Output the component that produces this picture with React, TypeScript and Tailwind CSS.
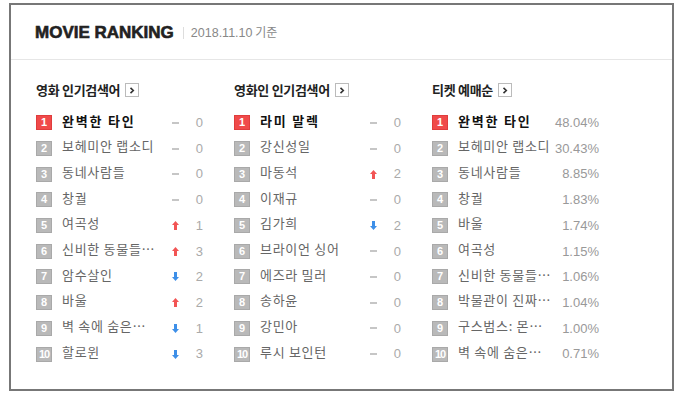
import React from "react";

type Trend = "same" | "up" | "down";
type Row = { name: string; trend?: Trend; diff?: number; rate?: string };

const KR = "font-['Noto_Sans_CJK_KR','Noto_Sans',sans-serif]";

const movieSearch: Row[] = [
  { name: "완벽한 타인", trend: "same", diff: 0 },
  { name: "보헤미안 랩소디", trend: "same", diff: 0 },
  { name: "동네사람들", trend: "same", diff: 0 },
  { name: "창궐", trend: "same", diff: 0 },
  { name: "여곡성", trend: "up", diff: 1 },
  { name: "신비한 동물들⋯", trend: "up", diff: 3 },
  { name: "암수살인", trend: "down", diff: 2 },
  { name: "바울", trend: "up", diff: 2 },
  { name: "벽 속에 숨은⋯", trend: "down", diff: 1 },
  { name: "할로윈", trend: "down", diff: 3 },
];

const peopleSearch: Row[] = [
  { name: "라미 말렉", trend: "same", diff: 0 },
  { name: "강신성일", trend: "same", diff: 0 },
  { name: "마동석", trend: "up", diff: 2 },
  { name: "이재규", trend: "same", diff: 0 },
  { name: "김가희", trend: "down", diff: 2 },
  { name: "브라이언 싱어", trend: "same", diff: 0 },
  { name: "에즈라 밀러", trend: "same", diff: 0 },
  { name: "송하윤", trend: "same", diff: 0 },
  { name: "강민아", trend: "same", diff: 0 },
  { name: "루시 보인턴", trend: "same", diff: 0 },
];

const ticketRank: Row[] = [
  { name: "완벽한 타인", rate: "48.04%" },
  { name: "보헤미안 랩소디", rate: "30.43%" },
  { name: "동네사람들", rate: "8.85%" },
  { name: "창궐", rate: "1.83%" },
  { name: "바울", rate: "1.74%" },
  { name: "여곡성", rate: "1.15%" },
  { name: "신비한 동물들⋯", rate: "1.06%" },
  { name: "박물관이 진짜⋯", rate: "1.04%" },
  { name: "구스범스: 몬⋯", rate: "1.00%" },
  { name: "벽 속에 숨은⋯", rate: "0.71%" },
];

const TrendIcon = ({ trend }: { trend: Trend }) => {
  if (trend === "same") return <span className="block w-[7px] h-[2px] bg-[#c6c6c6]" />;
  if (trend === "up")
    return (
      <svg width="7" height="9" viewBox="0 0 7 9" className="block">
        <path d="M3.5 0 L7 4 H5 V9 H2 V4 H0 Z" fill="#f25454" />
      </svg>
    );
  return (
    <svg width="7" height="9" viewBox="0 0 7 9" className="block">
      <path d="M3.5 9 L7 5 H5 V0 H2 V5 H0 Z" fill="#3d8fe8" />
    </svg>
  );
};

const Badge = ({ rank }: { rank: number }) => (
  <span
    className={`w-[16px] h-[15px] shrink-0 flex items-center justify-center border text-white font-bold text-[11px] leading-none font-['Liberation_Sans',sans-serif] ${
      rank === 1 ? "bg-[#f04a4a] border-[#e03c3c]" : "bg-[#b9b9b9] border-[#a9a9a9]"
    } ${rank === 10 ? "tracking-[-1px]" : ""}`}
  >
    {rank}
  </span>
);

const Column = ({ title, rows }: { title: string; rows: Row[] }) => (
  <div className="w-[198px] shrink-0">
    <div className="h-[16px] flex items-center gap-[5px]">
      <span className={`${KR} text-[13px] font-bold text-[#222] tracking-[-0.3px]`}>{title}</span>
      <span className="w-[14px] h-[14px] border border-[#bbb] flex items-center justify-center">
        <svg width="6" height="7" viewBox="0 0 6 7">
          <path d="M1.5 0.8 L4.3 3.5 L1.5 6.2" stroke="#333" strokeWidth="1.6" fill="none" />
        </svg>
      </span>
    </div>
    <ul className="mt-[12px]">
      {rows.map((r, i) => (
        <li key={i} className="h-[25.7px] flex items-center">
          <Badge rank={i + 1} />
          <span
            className={`ml-[10px] pb-[5px] whitespace-nowrap overflow-hidden ${KR} text-[13px] ${
              r.rate ? "flex-1" : "w-[110px]"
            } ${i === 0 ? "font-bold text-[#111] tracking-[1.8px]" : "text-[#666] tracking-[0.7px]"}`}
          >
            {r.name}
          </span>
          {r.trend && (
            <>
              <span className="w-[7px] flex justify-center">
                <TrendIcon trend={r.trend} />
              </span>
              <span className="w-[24px] text-right text-[13px] text-[#aaa] font-['Liberation_Sans',sans-serif]">
                {r.diff}
              </span>
            </>
          )}
          {r.rate && (
            <span className="w-[46px] mr-[31px] text-right text-[13px] text-[#999] font-['Liberation_Sans',sans-serif]">
              {r.rate}
            </span>
          )}
        </li>
      ))}
    </ul>
  </div>
);

export default function App() {
  return (
    <div className="w-[684px] h-[401px] bg-white pt-[3px] pl-[9px]">
      <div className="w-[665px] h-[388px] border-2 border-[#777]">
        <div className="h-[55px] border-b border-[#e6e6e6] flex items-center pl-[24px] pt-[1px]">
          <h1 className="text-[17px] font-black text-[#222] font-['Liberation_Sans',sans-serif] [-webkit-text-stroke:0.6px_#222]">
            MOVIE RANKING
          </h1>
          <span className="ml-[9px] w-px h-[12px] bg-[#ddd]" />
          <span className={`ml-[7px] text-[12px] text-[#888] ${KR}`}>
            <span className="font-['Liberation_Sans',sans-serif] text-[12.5px]">2018.11.10</span> 기준
          </span>
        </div>
        <div className="flex pl-[25px] pt-[22px]">
          <Column title="영화 인기검색어" rows={movieSearch} />
          <Column title="영화인 인기검색어" rows={peopleSearch} />
          <Column title="티켓 예매순" rows={ticketRank} />
        </div>
      </div>
    </div>
  );
}
